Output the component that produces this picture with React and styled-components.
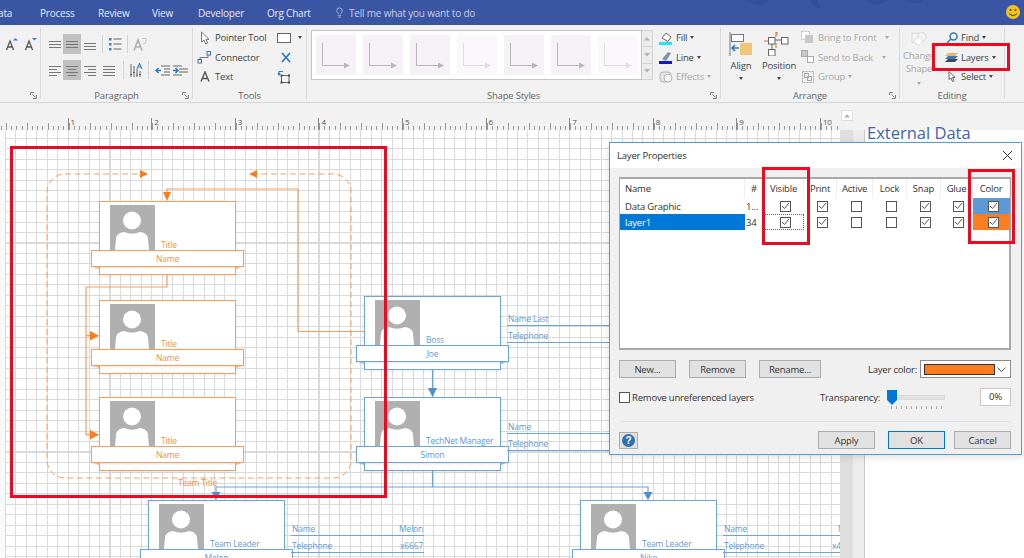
import React from "react";
import styled, { createGlobalStyle } from "styled-components";
import { Lightbulb } from "lucide-react";

const FONT = '"Open Sans", "Noto Sans", sans-serif';
const ORANGE = "#f99d58";
const ORANGE_TEXT = "#f58f4c";
const BLUE = "#6ba5df";
const BLUE_TEXT = "#5f9ad6";

const GlobalStyle = createGlobalStyle`
  html, body {
    margin: 0;
    padding: 0;
    background: #fff;
  }
  * {
    box-sizing: border-box;
  }
`;

const Page = styled.div`
  position: relative;
  width: 1024px;
  height: 558px;
  overflow: hidden;
  display: flex;
  flex-direction: column;
  font-family: ${FONT};
  font-size: 9.5px;
  letter-spacing: -0.2px;
  color: #444;
`;

/* title bar */
const TabBar = styled.div`
  position: relative;
  flex: none;
  height: 25px;
  background: #3a55a3;
  display: flex;
  align-items: center;
  padding-left: 40px;
  overflow: hidden;
`;

const Tab = styled.span`
  width: ${(p) => p.$w}px;
  flex: none;
  font-size: 10px;
  color: #e6ebf6;
  white-space: nowrap;
`;

const TabClipped = styled(Tab)`
  margin-left: -47px;
  text-indent: -2px;
`;

const TellMe = styled.div`
  display: flex;
  align-items: center;
  gap: 4px;
  font-size: 10px;
  color: #c3cde6;
  svg {
    flex: none;
  }
`;

const Leaves = styled.svg`
  position: absolute;
  left: 740px;
  top: 0;
`;

const Smiley = styled.svg`
  position: absolute;
  right: 3px;
  top: 4px;
`;

/* ribbon */
const Ribbon = styled.div`
  flex: none;
  height: 78px;
  display: flex;
  padding-top: 3px;
  background: #f1f1f1;
  border-bottom: 1px solid #d6d6d6;
`;

const Group = styled.section`
  position: relative;
  flex: none;
  width: ${(p) => p.$w}px;
  height: 71px;
  border-right: 1px solid #d9d9d9;
`;

const GroupBody = styled.div`
  height: 60px;
  display: flex;
  padding-left: ${(p) => p.$pad || 0}px;
`;

const GroupLabel = styled.div`
  height: 11px;
  line-height: 15px;
  text-align: center;
  color: #666;
`;

const Launcher = styled.svg`
  position: absolute;
  right: 3px;
  bottom: 0;
`;

const Stack = styled.div`
  flex: none;
  display: flex;
  flex-direction: column;
  gap: ${(p) => p.$gap || 0}px;
  width: ${(p) => (p.$width ? `${p.$width}px` : "auto")};
  padding-top: ${(p) => p.$top || 0}px;
  margin-left: ${(p) => p.$left || 0}px;
`;

const IconRow = styled.div`
  display: flex;
  align-items: center;
  height: ${(p) => p.$h || 20}px;
  margin-left: ${(p) => p.$left || 0}px;
`;

const IconButton = styled.span`
  flex: none;
  width: ${(p) => p.$w || 18}px;
  height: 20px;
  display: flex;
  align-items: center;
  justify-content: center;
  background: ${(p) => (p.$on ? "#c0c0c0" : "transparent")};
`;

const RowRule = styled.span`
  flex: none;
  width: 1px;
  height: 18px;
  margin: 0 4px;
  background: #d2d2d2;
`;

const Cmd = styled.div`
  display: flex;
  align-items: center;
  height: 19.5px;
  gap: ${(p) => p.$gap ?? 4}px;
  padding-left: ${(p) => p.$pad || 0}px;
  color: ${(p) => (p.$off ? "#a8a8a8" : "#444")};
  white-space: nowrap;
`;

const CmdIcon = styled.span`
  flex: none;
  width: ${(p) => p.$w || 14}px;
  display: flex;
  justify-content: center;
`;

const Caret = styled.i`
  display: inline-block;
  flex: none;
  width: 0;
  height: 0;
  margin-left: ${(p) => p.$left ?? 2}px;
  margin-top: ${(p) => p.$top || 0}px;
  border-left: 2.5px solid transparent;
  border-right: 2.5px solid transparent;
  border-top: 3px solid currentColor;
`;

const Gallery = styled.div`
  flex: none;
  width: 331px;
  height: 50px;
  margin-top: 2px;
  padding: 4px;
  display: flex;
  gap: 7px;
  background: #fff;
  border: 1px solid #c4c4c4;
`;

const Thumb = styled.svg`
  flex: none;
  background: #f5f1f6;
`;

const GalleryScroll = styled.div`
  flex: none;
  width: 11px;
  height: 50px;
  margin-top: 2px;
  display: flex;
  flex-direction: column;
`;

const ScrollStep = styled.span`
  flex: 1;
  display: flex;
  align-items: center;
  justify-content: center;
  background: #ececec;
  border: 1px solid #d4d4d4;
  border-left: none;
  & + & {
    border-top: none;
  }
`;

const BigCmd = styled.div`
  flex: none;
  width: ${(p) => p.$w}px;
  padding-top: 4px;
  display: flex;
  flex-direction: column;
  align-items: center;
  color: ${(p) => (p.$off ? "#a8a8a8" : "#444")};
  line-height: 13px;
  text-align: center;
  svg {
    margin-bottom: 3px;
  }
`;

/* ruler */
const RulerBand = styled.div`
  flex: none;
  height: 27px;
  display: flex;
  background: #f2f2f2;
`;

const Ruler = styled.div`
  flex: none;
  width: 856px;
  height: 27px;
  display: flex;
  overflow: hidden;
  margin-left: -16px;
  padding-top: 15px;
`;

const Inch = styled.div`
  flex: none;
  width: 83.6px;
  height: 12px;
  border-left: 1px solid #888;
  padding-left: 2px;
  font-size: 8px;
  line-height: 8px;
  color: #555;
  background:
    repeating-linear-gradient(to right, #999 0, #999 1px, transparent 1px, transparent 5.225px) 0 100% / 100% 4px no-repeat,
    repeating-linear-gradient(to right, #999 0, #999 1px, transparent 1px, transparent 20.9px) 0 100% / 100% 7px no-repeat;
`;

const ScrollTop = styled.div`
  width: 24px;
  height: 27px;
  padding-top: 7px;
  background: #f2f2f2;
`;

const ScrollUp = styled.span`
  display: flex;
  align-items: center;
  justify-content: center;
  margin-left: 1px;
  width: 12px;
  height: 11px;
  background: #fff;
  border: 1px solid #ddd;
`;

/* page below ruler */
const Workspace = styled.div`
  flex: 1;
  display: flex;
  min-height: 0;
`;

const Canvas = styled.div`
  position: relative;
  flex: none;
  width: 840px;
  overflow: hidden;
  background:
    repeating-linear-gradient(to right, #dadada 0, #dadada 1px, transparent 1px, transparent 10.45px) 5px 0,
    repeating-linear-gradient(to bottom, #dadada 0, #dadada 1px, transparent 1px, transparent 10.45px) 0 8px,
    #fff;
  &::before {
    content: "";
    position: absolute;
    left: 0;
    top: 0;
    bottom: 0;
    width: 5px;
    background: #fafafa;
  }
`;

const ScrollBar = styled.div`
  flex: none;
  width: 25px;
  display: flex;
  background: #ececec;
  border-right: 1px solid #c8c8c8;
  &::before {
    content: "";
    width: 13px;
    background: #dfdfdf;
  }
`;

const SidePanel = styled.aside`
  flex: 1;
  background: #fff;
  padding-left: 2px;
`;

const PanelTitle = styled.h2`
  position: relative;
  margin: -7px 0 0;
  font-size: 16.5px;
  line-height: 20px;
  font-weight: 400;
  letter-spacing: 0;
  color: #3f62b5;
  white-space: nowrap;
`;

const Connectors = styled.svg`
  position: absolute;
  left: 0;
  top: 0;
`;

const NodeBox = styled.div`
  position: absolute;
  left: ${(p) => p.$x}px;
  top: ${(p) => p.$y}px;
  width: 137px;
  height: 74px;
  background: #fff;
  border: 1px solid ${(p) => p.$color};
  box-shadow: 0 1px 3px rgba(120, 120, 120, 0.14);
`;

const NodeTop = styled.div`
  height: 48px;
  padding: 3px 0 0 10px;
  display: flex;
  align-items: flex-end;
  gap: 6px;
`;

const Photo = styled.svg`
  flex: none;
  align-self: flex-start;
`;

const NodeTitle = styled.span`
  font-size: 8.5px;
  line-height: 10px;
  color: ${(p) => p.$color};
  white-space: nowrap;
`;

const Banner = styled.div`
  position: relative;
  height: 17px;
  margin: 0 -9px;
  background: #fff;
  border: 1px solid ${(p) => p.$color};
  box-shadow: 0 1px 2px rgba(120, 120, 120, 0.16);
  text-align: center;
  line-height: 15px;
  font-size: 8.5px;
  color: ${(p) => p.$text};
  &::before,
  &::after {
    content: "";
    position: absolute;
    top: 100%;
    width: 8px;
    height: 3px;
    background: ${(p) => p.$color};
    opacity: 0.7;
  }
  &::before {
    left: -1px;
    clip-path: polygon(0 0, 100% 0, 100% 100%);
  }
  &::after {
    right: -1px;
    clip-path: polygon(0 0, 100% 0, 0 100%);
  }
`;

const DataField = styled.div`
  position: absolute;
  left: ${(p) => p.$x}px;
  top: ${(p) => p.$y}px;
  width: ${(p) => p.$w}px;
  height: 15px;
  display: flex;
  justify-content: space-between;
  align-items: center;
  padding: 0 1px;
  border-bottom: 1px solid ${BLUE};
  font-size: 8.5px;
  color: ${BLUE_TEXT};
  white-space: nowrap;
`;

const TeamTitle = styled.span`
  position: absolute;
  left: 178px;
  top: 347px;
  font-size: 8.5px;
  line-height: 12px;
  color: ${ORANGE_TEXT};
`;

/* dialog */
const Dialog = styled.div`
  position: absolute;
  left: 609px;
  top: 142px;
  width: 413px;
  height: 313px;
  display: flex;
  flex-direction: column;
  background: #f0f0f0;
  border: 1px solid #4a9fe0;
  box-shadow: 0 2px 8px rgba(0, 0, 0, 0.12);
`;

const DialogHead = styled.div`
  flex: none;
  height: 25px;
  display: flex;
  align-items: center;
  justify-content: space-between;
  padding: 0 8px 0 7px;
  background: #fff;
  color: #333;
`;

const DialogBody = styled.div`
  flex: 1;
  padding: 9px 10px 0 9px;
  display: flex;
  flex-direction: column;
`;

const ListBox = styled.div`
  flex: none;
  height: 173px;
  background: #fff;
  border: 1px solid #a9a9a9;
  border-width: 2px 2px 2px 1px;
  color: #333;
`;

const ListRow = styled.div`
  display: grid;
  grid-template-columns: 125px 19px 40px 33px 36px 34px 34px 32px 37px;
  height: ${(p) => p.$h}px;
`;

const HeadCell = styled.div`
  display: flex;
  align-items: center;
  justify-content: ${(p) => (p.$left ? "flex-start" : "center")};
  padding-left: ${(p) => (p.$left ? 5 : 0)}px;
  border-right: 1px solid #efefef;
  overflow: hidden;
  white-space: nowrap;
`;

const Cell = styled.div`
  display: flex;
  align-items: center;
  justify-content: ${(p) => (p.$left ? "flex-start" : "center")};
  padding-left: ${(p) => p.$pad ?? 3}px;
  overflow: hidden;
  white-space: nowrap;
  background: ${(p) => p.$bg || "transparent"};
  color: ${(p) => (p.$selected ? "#fff" : "#333")};
  border: ${(p) => (p.$focus ? "1px dotted #666" : "none")};
`;

const Check = styled.span`
  flex: none;
  width: 11px;
  height: 11px;
  display: flex;
  align-items: center;
  justify-content: center;
  background: #fff;
  border: 1px solid #555;
`;

const ButtonRow = styled.div`
  flex: none;
  display: flex;
  align-items: center;
  margin-top: ${(p) => p.$top}px;
  gap: ${(p) => p.$gap ?? 13}px;
`;

const DlgButton = styled.button`
  flex: none;
  width: ${(p) => p.$w || 57}px;
  height: 18px;
  margin: 0 0 0 ${(p) => p.$left || 0}px;
  padding: 0;
  background: #e1e1e1;
  border: ${(p) => (p.$primary ? "1.5px solid #0078d7" : "1px solid #adadad")};
  font-family: ${FONT};
  font-size: 9.5px;
  letter-spacing: -0.2px;
  color: #333;
`;

const FieldLabel = styled.span`
  color: #333;
  white-space: nowrap;
`;

const ColorPicker = styled.div`
  display: flex;
  align-items: center;
  gap: 3px;
  margin-left: auto;
`;

const ColorCombo = styled.div`
  flex: none;
  width: 91px;
  height: 18px;
  display: flex;
  align-items: center;
  justify-content: space-between;
  padding: 0 4px 0 3px;
  background: #fff;
  border: 1px solid #8c8c8c;
`;

const ColorSwatch = styled.span`
  width: 71px;
  height: 11px;
  background: #ff7c1e;
  border: 1px solid #333;
`;

const Spacer = styled.span`
  flex: 1;
`;

const CheckLabel = styled.div`
  display: flex;
  align-items: center;
  gap: 2px;
  color: #333;
  white-space: nowrap;
`;

const Slider = styled.div`
  position: relative;
  flex: none;
  width: 60px;
  height: 18px;
  margin: 0 33px 0 7px;
  &::before {
    content: "";
    position: absolute;
    left: 0;
    right: 2px;
    top: 7px;
    height: 3px;
    background: #e2e2e2;
    border: 1px solid #dadada;
  }
  &::after {
    content: "";
    position: absolute;
    left: 4px;
    right: 4px;
    top: 18px;
    height: 3px;
    background: repeating-linear-gradient(to right, #aaa 0, #aaa 1px, transparent 1px, transparent 5px);
  }
`;

const SliderThumb = styled.svg`
  position: absolute;
  left: 0;
  top: 2px;
  z-index: 1;
`;

const PercentField = styled.div`
  flex: none;
  width: 31px;
  height: 18px;
  text-align: center;
  line-height: 16px;
  background: #fff;
  border: 1px solid #c8c8c8;
  color: #333;
`;

const Divider = styled.div`
  flex: none;
  height: 1px;
  margin-top: 15px;
  background: #dde3e6;
`;

const HelpButton = styled.span`
  flex: none;
  width: 19px;
  height: 17px;
  margin-right: auto;
  display: flex;
  align-items: center;
  justify-content: center;
  background: #e1e1e1;
  border: 1px solid #adadad;
`;

const Annotation = styled.div`
  position: absolute;
  left: ${(p) => p.$x}px;
  top: ${(p) => p.$y}px;
  width: ${(p) => p.$w}px;
  height: ${(p) => p.$h}px;
  border: 3px solid #ea0a22;
  pointer-events: none;
`;

function Line({ d, w = 14, h = 14, color = "#777", sw = 1 }) {
  return (
    <svg width={w} height={h} viewBox={`0 0 ${w} ${h}`} fill="none" stroke={color} strokeWidth={sw}>
      <path d={d} />
    </svg>
  );
}

const LauncherIcon = () => (
  <Launcher width="7" height="7" viewBox="0 0 7 7" fill="none" stroke="#888" strokeWidth="1">
    <path d="M6.5 3v3.5H3M.5 3V.5H4M2.5 2.5l3 3" />
  </Launcher>
);

const BumpA = ({ up }) => (
  <svg width="13" height="14" viewBox="0 0 13 14" fill="none">
    <path d="M1.5 13L5 4l3.5 9M3 10h4" stroke="#555" strokeWidth="1.3" />
    <path d={up ? "M8 3.5L10.5 1 13 3.5z" : "M8 1l2.5 2.5L13 1z"} fill="#3f7fc4" />
  </svg>
);

const ThumbArrow = ({ faded }) => (
  <Thumb width="40" height="40" viewBox="0 0 40 40" fill="none" opacity={faded ? 0.45 : 1}>
    <path d="M6.5 8v22.5H28" stroke="#b9b6ba" strokeWidth="1" />
    <path d="M28 27.5l6 3-6 3z" fill="#b9b6ba" />
  </Thumb>
);

const StepTri = ({ down }) => (
  <svg width="6" height="4" viewBox="0 0 6 4">
    <path d={down ? "M0 0h6L3 3.5z" : "M0 3.5h6L3 0z"} fill="#b5b5b5" />
  </svg>
);

function Avatar() {
  return (
    <Photo width="45" height="45" viewBox="0 0 45 45">
      <rect width="45" height="45" fill="#b0b0b0" />
      <circle cx="22" cy="15.5" r="9" fill="#fff" />
      <path d="M5 45l1-11.5q.6-5.5 8-6.5 8 3.5 16 0 7.4 1 8 6.5l1 11.5z" fill="#fff" />
    </Photo>
  );
}

function OrgNode({ x, y, color, text, title, name }) {
  return (
    <NodeBox $x={x} $y={y} $color={color}>
      <NodeTop>
        <Avatar />
        <NodeTitle $color={text}>{title}</NodeTitle>
      </NodeTop>
      <Banner $color={color} $text={text}>
        {name}
      </Banner>
    </NodeBox>
  );
}

const orangeNodes = [
  { x: 99, y: 71, title: "Title", name: "Name" },
  { x: 99, y: 170, title: "Title", name: "Name" },
  { x: 99, y: 267, title: "Title", name: "Name" },
];

const blueNodes = [
  { x: 364, y: 166, title: "Boss", name: "Joe" },
  { x: 364, y: 267, title: "TechNet Manager", name: "Simon" },
  { x: 148, y: 370, title: "Team Leader", name: "Melon" },
  { x: 580, y: 370, title: "Team Leader", name: "Nike" },
];

const fields = [
  { x: 507, y: 181, w: 140, label: "Name Last" },
  { x: 507, y: 198, w: 140, label: "Telephone" },
  { x: 507, y: 289, w: 140, label: "Name" },
  { x: 507, y: 306, w: 140, label: "Telephone" },
  { x: 291, y: 391, w: 133, label: "Name", value: "Melon" },
  { x: 291, y: 408, w: 133, label: "Telephone", value: "x6667" },
  { x: 723, y: 391, w: 133, label: "Name", value: "Nike" },
  { x: 723, y: 408, w: 133, label: "Telephone", value: "x4667" },
];

const layers = [
  { name: "Data Graphic", count: "1...", flags: [1, 1, 0, 0, 1, 1], color: "#5b9bd5" },
  { name: "layer1", count: "34", flags: [1, 1, 0, 0, 1, 1], color: "#fd7d22", selected: true },
];

const Tick = () => (
  <svg width="9" height="8" viewBox="0 0 9 8" fill="none" stroke="#555" strokeWidth="1">
    <path d="M1 4l2.5 2.5L8 1" />
  </svg>
);

export default function App() {
  return (
    <Page>
      <GlobalStyle />
      <TabBar>
        <TabClipped $w={47}>Data</TabClipped>
        <Tab $w={58}>Process</Tab>
        <Tab $w={54}>Review</Tab>
        <Tab $w={46}>View</Tab>
        <Tab $w={69}>Developer</Tab>
        <Tab $w={67}>Org Chart</Tab>
        <TellMe>
          <Lightbulb size={11} strokeWidth={1.4} color="#dfe5f3" />
          Tell me what you want to do
        </TellMe>
        <Leaves width="200" height="10" viewBox="0 0 200 10" fill="#34509b">
          <path d="M5 0q8 6 18 5 4-3 6-5zM70 0q3 7 10 9 0-6-3-9zM125 0q8 7 20 3 2-2 3-3zM165 0q6 6 18 2v-2z" />
        </Leaves>
        <Smiley width="16" height="16" viewBox="0 0 16 16">
          <circle cx="8" cy="8" r="7" fill="#f2c21f" />
          <circle cx="5.5" cy="6" r="1" fill="#4a4520" />
          <circle cx="10.5" cy="6" r="1" fill="#4a4520" />
          <path d="M4 9.5q4 4 8 0" fill="none" stroke="#4a4520" strokeWidth="1" />
        </Smiley>
      </TabBar>

      <Ribbon>
        <Group $w={41}>
          <GroupBody $pad={2}>
            <IconRow $h={32}>
              <IconButton $w={19}><BumpA up /></IconButton>
              <IconButton $w={19}><BumpA /></IconButton>
            </IconRow>
          </GroupBody>
          <LauncherIcon />
        </Group>

        <Group $w={152}>
          <GroupBody>
            <Stack $top={6} $gap={6}>
              <IconRow $left={5}>
                <IconButton $w={17}><Line d="M2 3.5h12M2 6.5h12M2 9.5h12" w={16} h={13} /></IconButton>
                <IconButton $on><Line d="M1 4.5h12M1 7.5h12M1 10.5h12" /></IconButton>
                <IconButton $w={17}><Line d="M1 6.5h12M1 9.5h12M1 12.5h12" /></IconButton>
                <RowRule />
                <IconButton $w={16}>
                  <svg width="13" height="14" viewBox="0 0 13 14">
                    <g fill="#3f7fc4"><rect x="0" y="1" width="2.5" height="2.5" /><rect x="0" y="6" width="2.5" height="2.5" /><rect x="0" y="11" width="2.5" height="2.5" /></g>
                    <path d="M4.5 2h8M4.5 7h8M4.5 12h8" stroke="#666" strokeWidth="1" />
                  </svg>
                </IconButton>
                <RowRule />
                <IconButton $w={16}>
                  <svg width="14" height="14" viewBox="0 0 14 14" fill="none">
                    <path d="M1 13.5L5 3l4 10.5M2.5 10h5" stroke="#b0b0b0" strokeWidth="1.6" />
                    <path d="M9 1.5h4v2.5M13 4a3 3 0 0 1-3 3" stroke="#c4c4c4" strokeWidth="1" />
                  </svg>
                </IconButton>
              </IconRow>
              <IconRow $left={5}>
                <IconButton $w={17}><Line d="M2 3.5h12M2 6.5h8M2 9.5h12M2 12.5h8" w={16} /></IconButton>
                <IconButton $on><Line d="M1 3.5h12M3 6.5h8M1 9.5h12M3 12.5h8" /></IconButton>
                <IconButton $w={17}><Line d="M1 3.5h12M5 6.5h8M1 9.5h12M5 12.5h8" /></IconButton>
                <IconButton $w={21}><Line d="M1 3.5h12M1 6.5h12M1 9.5h12M1 12.5h12" /></IconButton>
                <RowRule />
                <IconButton $w={16}>
                  <svg width="15" height="15" viewBox="0 0 15 15" fill="none">
                    <path d="M2 1v13M5 3v11M8 6v8M11 8v6" stroke="#666" strokeWidth="1" />
                    <path d="M1 11.5h2M4 9.5h2M7 12h2M10 11.5h2" stroke="#666" strokeWidth="1" />
                    <path d="M8 6l2.5-5.5L13 6M9 4h3" stroke="#3f7fc4" strokeWidth="1.1" />
                  </svg>
                </IconButton>
                <RowRule />
                <IconButton $w={18}>
                  <svg width="15" height="13" viewBox="0 0 15 13" fill="none">
                    <path d="M6 2h9M9 5h6M9 8h6M6 11h9" stroke="#666" strokeWidth="1" />
                    <path d="M6 6.5H1M3.5 4L1 6.5 3.5 9" stroke="#2f78c2" strokeWidth="1.5" />
                  </svg>
                </IconButton>
                <IconButton $w={18}>
                  <svg width="15" height="13" viewBox="0 0 15 13" fill="none">
                    <path d="M0 2h9M6 5h9M6 8h9M0 11h9" stroke="#666" strokeWidth="1" />
                    <path d="M0 6.5h5M2.5 4L5 6.5 2.5 9" stroke="#2f78c2" strokeWidth="1.5" />
                  </svg>
                </IconButton>
              </IconRow>
            </Stack>
          </GroupBody>
          <GroupLabel>Paragraph</GroupLabel>
          <LauncherIcon />
        </Group>

        <Group $w={114}>
          <GroupBody>
            <Stack $left={4} $width={80}>
              <Cmd $gap={3}>
                <CmdIcon $w={15}>
                  <svg width="10" height="14" viewBox="0 0 10 14" fill="#fff" stroke="#777" strokeWidth="1">
                    <path d="M1.5 1v10l2.5-2 1.8 4 1.8-.8L6 8.4h3z" />
                  </svg>
                </CmdIcon>
                Pointer Tool
              </Cmd>
              <Cmd $gap={3}>
                <CmdIcon $w={15}>
                  <svg width="15" height="14" viewBox="0 0 15 14" fill="none" strokeWidth="1">
                    <path d="M3 9V7.5h8V5" stroke="#777" />
                    <rect x="1" y="9.5" width="3.5" height="3.5" stroke="#3a76b8" />
                    <rect x="10" y="1.5" width="3.5" height="3.5" stroke="#3a76b8" />
                  </svg>
                </CmdIcon>
                Connector
              </Cmd>
              <Cmd $gap={3}>
                <CmdIcon $w={15}>
                  <svg width="10" height="11" viewBox="0 0 10 11" fill="none" stroke="#555" strokeWidth="1.4">
                    <path d="M1 10.500L5 1l4 9.500M2.500 7.500h5" />
                  </svg>
                </CmdIcon>
                Text
              </Cmd>
            </Stack>
            <Stack>
              <Cmd $gap={4}>
                <svg width="14" height="10" viewBox="0 0 14 10"><rect x=".5" y=".5" width="13" height="9" fill="#fff" stroke="#666" /></svg>
                <Caret $left={3} />
              </Cmd>
              <Cmd $pad={3}>
                <svg width="14" height="11" viewBox="0 0 14 11" fill="none" stroke="#2f78c2" strokeWidth="1.7">
                  <path d="M2 1l8 9M10 1l-8 9" />
                </svg>
              </Cmd>
              <Cmd>
                <svg width="14" height="14" viewBox="0 0 14 14" fill="none">
                  <rect x="4.500" y="5.500" width="7.500" height="7" stroke="#666" />
                  <g fill="#444"><rect x="3.500" y="4.500" width="2" height="2" /><rect x="11" y="4.500" width="2" height="2" /><rect x="3.500" y="11.500" width="2" height="2" /><rect x="11" y="11.500" width="2" height="2" /></g>
                  <path d="M6 1.500H2v3M1 3l1 2 1-2" stroke="#2f78c2" strokeWidth="1.100" />
                </svg>
              </Cmd>
            </Stack>
          </GroupBody>
          <GroupLabel>Tools</GroupLabel>
        </Group>

        <Group $w={414}>
          <GroupBody $pad={4}>
            <Gallery>
              <ThumbArrow />
              <ThumbArrow />
              <ThumbArrow />
              <ThumbArrow faded />
              <ThumbArrow />
              <ThumbArrow />
              <ThumbArrow faded />
            </Gallery>
            <GalleryScroll>
              <ScrollStep><StepTri /></ScrollStep>
              <ScrollStep><StepTri down /></ScrollStep>
              <ScrollStep><StepTri down /></ScrollStep>
            </GalleryScroll>
            <Stack $left={6}>
              <Cmd $gap={3}>
                <svg width="14" height="14" viewBox="0 0 14 14">
                  <path d="M3 7l4-5 5 4-3 4.500z" fill="#fff" stroke="#666" />
                  <rect x="0" y="11" width="13" height="3" fill="#1fe6f2" />
                </svg>
                Fill <Caret $left={0} />
              </Cmd>
              <Cmd $gap={3}>
                <svg width="14" height="14" viewBox="0 0 14 14">
                  <path d="M3 9l6-7 3 1-5 8z" fill="#7f93a8" />
                  <rect x="0" y="11" width="13" height="3" fill="#1414d6" />
                </svg>
                Line <Caret $left={0} />
              </Cmd>
              <Cmd $gap={3} $off>
                <svg width="14" height="14" viewBox="0 0 14 14" fill="none" stroke="#b5b5b5">
                  <rect x="1" y="2" width="11" height="10" rx="3" fill="#e4e4e4" />
                  <circle cx="9" cy="8" r="4" fill="#f4f4f4" />
                </svg>
                Effects <Caret $left={0} />
              </Cmd>
            </Stack>
          </GroupBody>
          <GroupLabel>Shape Styles</GroupLabel>
          <LauncherIcon />
        </Group>

        <Group $w={179}>
          <GroupBody>
            <BigCmd $w={40}>
              <svg width="24" height="24" viewBox="0 0 24 24" fill="none">
                <path d="M1 0v24" stroke="#777" />
                <rect x="2.500" y="2.500" width="12" height="7" fill="#fff" stroke="#777" />
                <rect x="11" y="11" width="12" height="12" fill="#efc678" />
                <path d="M10 16H3M6 13l-3 3 3 3" stroke="#2f78c2" strokeWidth="1.600" />
              </svg>
              Align
              <Caret $left={0} $top={5} />
            </BigCmd>
            <BigCmd $w={36}>
              <svg width="30" height="24" viewBox="0 0 30 24" fill="none">
                <path d="M12 0v5M0 9h5M13 0v3M12 11v5" stroke="#e0663a" />
                <path d="M11 8h7M8 11v7" stroke="#666" />
                <rect x="4.500" y="5.500" width="6.500" height="6.500" fill="#fff" stroke="#666" />
                <rect x="17.500" y="5.500" width="6.500" height="6.500" fill="#fff" stroke="#666" />
                <rect x="4.500" y="17.500" width="6.500" height="6.500" fill="#fff" stroke="#666" />
              </svg>
              Position
              <Caret $left={0} $top={5} />
            </BigCmd>
            <Stack $left={4}>
              <Cmd $off $gap={3}>
                <svg width="14" height="14" viewBox="0 0 14 14">
                  <rect x=".5" y=".5" width="8" height="8" fill="#fff" stroke="#bbb" strokeDasharray="2 1" />
                  <rect x="4" y="4" width="8" height="8" fill="#c8c8c8" />
                </svg>
                Bring to Front <Caret $left={6} />
              </Cmd>
              <Cmd $off $gap={3}>
                <svg width="14" height="14" viewBox="0 0 14 14">
                  <rect x=".5" y=".5" width="6" height="6" fill="#c8c8c8" stroke="#aaa" />
                  <rect x="6.500" y="6.500" width="6" height="6" fill="#fff" stroke="#aaa" />
                </svg>
                Send to Back <Caret $left={6} />
              </Cmd>
              <Cmd $off $gap={3}>
                <svg width="14" height="14" viewBox="0 0 14 14" fill="none" stroke="#aaa">
                  <rect x="1.500" y="1.500" width="11" height="11" strokeDasharray="2 1" />
                  <rect x="3.500" y="3.500" width="4" height="4" />
                  <rect x="6.500" y="6.500" width="4" height="4" />
                </svg>
                Group <Caret $left={0} />
              </Cmd>
            </Stack>
          </GroupBody>
          <GroupLabel>Arrange</GroupLabel>
          <LauncherIcon />
        </Group>

        <Group $w={105}>
          <GroupBody $pad={3}>
            <BigCmd $off $w={32}>
              <svg width="26" height="24" viewBox="0 0 26 24" fill="none" stroke="#cfcfcf" strokeWidth="1.200">
                <rect x="1" y="2" width="16" height="16" fill="#f4f4f4" />
                <circle cx="18" cy="8" r="7" fill="#f4f4f4" />
                <path d="M12 8l8 8-8 7-8-7z" fill="#fff" />
              </svg>
              Change
              <span>Shape <Caret $left={0} /></span>
            </BigCmd>
            <Stack $left={10}>
              <Cmd $gap={3}>
                <CmdIcon $w={13}>
                  <svg width="12" height="12" viewBox="0 0 12 12" fill="none" stroke="#2f78c2" strokeWidth="1.500">
                    <circle cx="7.500" cy="4.500" r="3.500" />
                    <path d="M5 7L1 11" />
                  </svg>
                </CmdIcon>
                Find <Caret $left={0} />
              </Cmd>
              <Cmd $gap={3}>
                <CmdIcon $w={13}>
                  <svg width="13" height="11" viewBox="0 0 13 11">
                    <path d="M3 1h10l-3 3H0z" fill="#eab565" />
                    <path d="M3 4h10l-3 3H0z" fill="#3f78b8" />
                    <path d="M3 7h10l-3 3H0z" fill="#3d4a5a" />
                  </svg>
                </CmdIcon>
                Layers <Caret $left={0} />
              </Cmd>
              <Cmd $gap={3}>
                <CmdIcon $w={13}>
                  <svg width="12" height="12" viewBox="0 0 12 12" fill="#fff" stroke="#666">
                    <path d="M3 .5v8l2-1.500 1.500 3.500 1.500-.7L6.500 6.500H9z" />
                  </svg>
                </CmdIcon>
                Select <Caret $left={0} />
              </Cmd>
            </Stack>
          </GroupBody>
          <GroupLabel>Editing</GroupLabel>
        </Group>
      </Ribbon>

      <RulerBand>
        <Ruler>
          {["", 1, 2, 3, 4, 5, 6, 7, 8, 9, 10].map((n) => (
            <Inch key={n}>{n}</Inch>
          ))}
        </Ruler>
        <ScrollTop>
          <ScrollUp>
            <StepTri />
          </ScrollUp>
        </ScrollTop>
      </RulerBand>

      <Workspace>
        <Canvas>
          <Connectors width="840" height="428" viewBox="0 0 840 428" fill="none">
            <path d="M147 44H65a18 18 0 0 0-18 18v268a18 18 0 0 0 18 18h268a18 18 0 0 0 18-18V62a18 18 0 0 0-18-18h-84" stroke={ORANGE} strokeDasharray="6 3.500" />
            <path d="M140 40l8 4-8 4zM257 40l-8 4 8 4z" fill="#fb7d20" />
            <path d="M364 201.500H298V59H167v4M167 145v12H86v147.700h5M86 205.700h5" stroke={ORANGE} strokeWidth="1.200" />
            <path d="M163 62h8l-4 9zM90 201l9 4.700-9 4.700zM90 300l9 4.700-9 4.700z" fill="#fb7d20" />
            <path d="M432.500 238v22M432.500 340v17M216 362v-5h432v5" stroke={BLUE} strokeWidth="1.200" />
            <path d="M428 258h9l-4.500 9zM211.500 362h9l-4.500 8zM643.500 362h9l-4.500 8z" fill="#4f8fd0" />
          </Connectors>
          {orangeNodes.map((n) => (
            <OrgNode key={n.y} {...n} color={ORANGE} text={ORANGE_TEXT} />
          ))}
          {blueNodes.map((n) => (
            <OrgNode key={n.name} {...n} color={BLUE} text={BLUE_TEXT} />
          ))}
          {fields.map((f) => (
            <DataField key={`${f.x}-${f.y}`} $x={f.x} $y={f.y} $w={f.w}>
              <span>{f.label}</span>
              {f.value && <span>{f.value}</span>}
            </DataField>
          ))}
          <TeamTitle>Team Title</TeamTitle>
        </Canvas>
        <ScrollBar />
        <SidePanel>
          <PanelTitle>External Data</PanelTitle>
        </SidePanel>
      </Workspace>

      <Dialog>
        <DialogHead>
          Layer Properties
          <svg width="11" height="11" viewBox="0 0 11 11" fill="none" stroke="#333" strokeWidth="1">
            <path d="M1 1l9 9M10 1l-9 9" />
          </svg>
        </DialogHead>
        <DialogBody>
          <ListBox>
            <ListRow $h={19}>
              <HeadCell $left>Name</HeadCell>
              <HeadCell>#</HeadCell>
              <HeadCell>Visible</HeadCell>
              <HeadCell>Print</HeadCell>
              <HeadCell>Active</HeadCell>
              <HeadCell>Lock</HeadCell>
              <HeadCell>Snap</HeadCell>
              <HeadCell>Glue</HeadCell>
              <HeadCell>Color</HeadCell>
            </ListRow>
            {layers.map((l) => (
              <ListRow key={l.name} $h={16}>
                <Cell $left $pad={5} $selected={l.selected} $bg={l.selected ? "#0078d7" : ""}>{l.name}</Cell>
                <Cell $left $pad={1}>{l.count}</Cell>
                {l.flags.map((on, i) => (
                  <Cell key={i} $focus={l.selected && i === 0}>
                    <Check>{on ? <Tick /> : null}</Check>
                  </Cell>
                ))}
                <Cell $bg={l.color}>
                  <Check><Tick /></Check>
                </Cell>
              </ListRow>
            ))}
          </ListBox>

          <ButtonRow $top={10}>
            <DlgButton>New...</DlgButton>
            <DlgButton>Remove</DlgButton>
            <DlgButton $w={62}>Rename...</DlgButton>
            <ColorPicker>
              <FieldLabel>Layer color:</FieldLabel>
              <ColorCombo>
                <ColorSwatch />
                <svg width="9" height="5" viewBox="0 0 9 5" fill="none" stroke="#555" strokeWidth="1">
                  <path d="M.5.500l4 4 4-4" />
                </svg>
              </ColorCombo>
            </ColorPicker>
          </ButtonRow>

          <ButtonRow $top={10} $gap={0}>
            <CheckLabel>
              <Check />
              Remove unreferenced layers
            </CheckLabel>
            <Spacer />
            <FieldLabel>Transparency:</FieldLabel>
            <Slider>
              <SliderThumb width="10" height="15" viewBox="0 0 10 15">
                <path d="M0 0h10v10l-5 5-5-5z" fill="#0078d7" />
              </SliderThumb>
            </Slider>
            <PercentField>0%</PercentField>
          </ButtonRow>

          <Divider />

          <ButtonRow $top={9} $gap={0}>
            <HelpButton>
              <svg width="13" height="13" viewBox="0 0 13 13">
                <circle cx="6.500" cy="6.500" r="6.500" fill="#2f6fb4" />
                <text x="6.500" y="10" textAnchor="middle" fontSize="10" fontWeight="700" fill="#fff" fontFamily="Liberation Sans, sans-serif">?</text>
              </svg>
            </HelpButton>
            <DlgButton>Apply</DlgButton>
            <DlgButton $primary $left={13}>OK</DlgButton>
            <DlgButton $left={9}>Cancel</DlgButton>
          </ButtonRow>
        </DialogBody>
      </Dialog>

      <Annotation $x={10} $y={146} $w={377} $h={352} />
      <Annotation $x={762} $y={167} $w={48} $h={78} />
      <Annotation $x={968} $y={169} $w={47} $h={75} />
      <Annotation $x={932} $y={43} $w={78} $h={28} />
    </Page>
  );
}
